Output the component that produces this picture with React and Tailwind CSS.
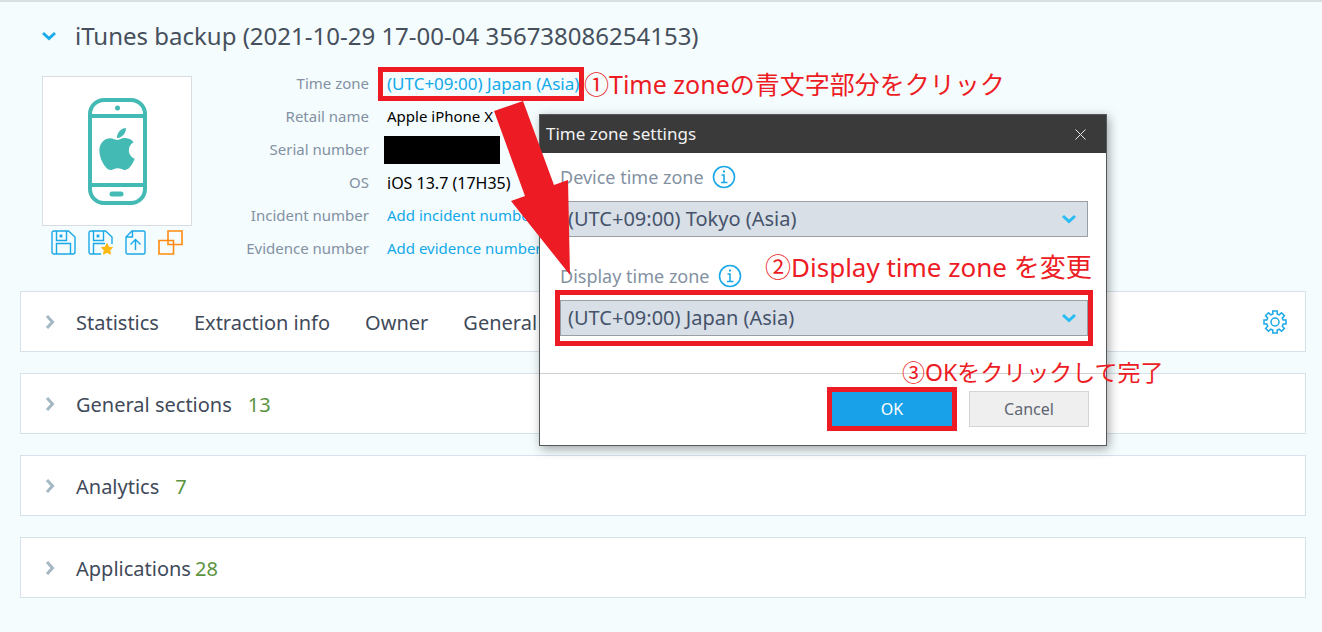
import React, { useState } from 'react';
import clsx from 'clsx';
import { FaApple } from 'react-icons/fa';

const SECTIONS = [
  { name: 'General sections', count: 13, gap: 'gap-4' },
  { name: 'Analytics', count: 7, gap: 'gap-4' },
  { name: 'Applications', count: 28, gap: 'gap-1' },
];

const TABS = ['Statistics', 'Extraction info', 'Owner', 'General'];

const Chevron = ({ className }) => (
  <svg viewBox="0 0 14 10" className={className} fill="none" stroke="currentColor" strokeWidth="3">
    <path d="M1 2l6 5.5L13 2" />
  </svg>
);

const SaveIcon = ({ starred }) => (
  <svg viewBox="0 0 25 25" className="h-[25px] w-[25px]" fill="none" stroke="#1ba8e6" strokeWidth="1.4">
    <path
      d={
        starred
          ? 'M13 24H3a2 2 0 0 1-2-2V3a2 2 0 0 1 2-2h14.500l6.500 6V14'
          : 'M3 1h14.500l6.500 6v15a2 2 0 0 1-2 2H3a2 2 0 0 1-2-2V3a2 2 0 0 1 2-2z'
      }
    />
    <path d="M5.500 1v9.500h10V1" />
    <path d={starred ? 'M5.500 24V13.500H17' : 'M5.500 24V13.500h14V24'} />
    <path d="M9.300 5.300h1.400v1.400H9.300z" />
    {starred && (
      <path
        d="M19 13.500l1.700 3.600 3.900.5-2.900 2.700.8 3.900-3.500-1.900-3.500 1.900.8-3.900-2.900-2.700 3.900-.5z"
        fill="#fdb913"
        stroke="#fdb913"
        strokeWidth="1"
      />
    )}
  </svg>
);

const ExportIcon = () => (
  <svg viewBox="0 0 21 25" className="h-[25px] w-[21px]" fill="none" stroke="#1ba8e6" strokeWidth="1.4">
    <path d="M7 1h11.500a1.500 1.500 0 0 1 1.500 1.500v20a1.500 1.500 0 0 1-1.500 1.500h-16a1.500 1.500 0 0 1-1.500-1.500V7z" />
    <path d="M7.500 1v6H1M10.500 20V10M5.500 14.500l5-5 5 5" />
  </svg>
);

const MergeIcon = () => (
  <svg viewBox="0 0 25 25" className="h-[25px] w-[25px]" fill="none" stroke="#ff8a0f" strokeWidth="1.6">
    <path d="M10 1h14v13.500H10zM1 10.500h14.500V24H1z" />
  </svg>
);

const GearIcon = () => (
  <svg viewBox="0 0 24 24" className="h-6 w-6" fill="none" stroke="#1ba8e6" strokeWidth="1.5">
    <circle cx="12" cy="12" r="4" />
    <path d="M9.800 1h4.400v3l2.100.9 2.200-2.100 2.900 2.900-2.100 2.200.9 2h2.800v4.200h-2.800l-.9 2.100 2.100 2.200-2.900 2.900-2.200-2.100-2.100.9v2.900H9.800v-2.900l-2.100-.9-2.200 2.100-2.900-2.900 2.100-2.200-.9-2.100H1V9.900h2.800l.9-2-2.100-2.200 2.900-2.900 2.200 2.100 2.100-.9z" />
  </svg>
);

const PhoneIcon = () => (
  <div className="relative flex h-[107px] w-[59px] items-center justify-center pb-1 text-[#43bab3]">
    <svg viewBox="0 0 59 107" className="absolute inset-0" fill="none" stroke="currentColor" strokeWidth="4">
      <rect x="2" y="2" width="55" height="103" rx="14" />
      <path d="M2 18h55M2 87h55" />
      <circle cx="29.500" cy="10" r="2.500" fill="currentColor" stroke="none" />
      <path d="M24 96h9" strokeWidth="5" strokeLinecap="round" />
    </svg>
    <FaApple className="h-12 w-12 shrink-0" />
  </div>
);

const InfoIcon = () => (
  <svg viewBox="0 0 24 24" className="h-6 w-6" fill="none" stroke="#1ba8e6" strokeWidth="1.6">
    <circle cx="12" cy="12" r="10.500" />
    <path d="M9.500 10H12v7M9 17.500h6.500" />
    <path d="M11 6.500h2" strokeWidth="2" />
  </svg>
);

const DetailRow = ({ label, children }) => (
  <div className="flex h-[33px] items-center">
    <dt className="w-[134px] text-right text-[#8391a2]">{label}</dt>
    <dd className="ml-[18px] text-black">{children}</dd>
  </div>
);

const Note = ({ className, children }) => (
  <p
    className={clsx(
      "absolute z-20 whitespace-nowrap font-['Noto_Sans','Noto_Sans_CJK_JP',sans-serif] leading-8 text-[#ed1c24]",
      className
    )}
  >
    {children}
  </p>
);

const ZoneSelect = ({ id, label, value, options, onChange }) => (
  <div>
    <div className="flex h-6 items-center gap-2">
      <label htmlFor={id} className="text-[18px] text-[#8391a2]">
        {label}
      </label>
      <InfoIcon />
    </div>
    <div className="relative mt-3">
      <select
        id={id}
        value={value}
        onChange={(e) => onChange(e.target.value)}
        className="block h-9 w-full appearance-none border border-[#9b9fa3] bg-[#d8dfe6] pl-[7px] text-[20px] leading-8 text-[#46536b]"
      >
        {options.map((o) => (
          <option key={o}>{o}</option>
        ))}
      </select>
      <Chevron className="pointer-events-none absolute right-3 top-[13px] h-[10px] w-[14px] text-[#27bdf3]" />
    </div>
  </div>
);

const TimeZoneDialog = () => {
  const [device, setDevice] = useState('(UTC+09:00) Tokyo (Asia)');
  const [display, setDisplay] = useState('(UTC+09:00) Japan (Asia)');
  const zones = ['(UTC+09:00) Tokyo (Asia)', '(UTC+09:00) Japan (Asia)'];

  return (
    <div
      role="dialog"
      aria-labelledby="dialog-title"
      className="absolute left-[539px] top-[112px] w-[568px] border border-[#55595c] bg-white shadow-[2px_3px_10px_rgba(0,0,0,0.35)]"
    >
      <header className="flex h-[38px] items-center justify-between bg-[#3a3a3a] pl-1.5 pr-5">
        <h2 id="dialog-title" className="text-[17px] text-[#f2f2f2]">
          Time zone settings
        </h2>
        <button type="button" aria-label="Close" className="text-[#e8e8e8]">
          <svg viewBox="0 0 11 11" className="h-[11px] w-[11px]" stroke="currentColor">
            <path d="M.5.5l10 10M10.500.5l-10 10" />
          </svg>
        </button>
      </header>

      <div className="flex flex-col gap-[27px] pb-[37px] pl-5 pr-[18px] pt-3">
        <ZoneSelect id="device-zone" label="Device time zone" value={device} options={zones} onChange={setDevice} />
        <div className="relative">
          <ZoneSelect id="display-zone" label="Display time zone" value={display} options={zones} onChange={setDisplay} />
          <div className="pointer-events-none absolute -bottom-2.5 -left-[5px] -right-[5px] h-14 border-5 border-[#ed1c24]" />
        </div>
      </div>

      <footer className="flex items-center justify-end gap-3 border-t border-[#cfcfcf] pb-3.5 pr-[17px] pt-[13px]">
        <button type="button" className="h-11 w-[130px] border-5 border-[#ed1c24] bg-[#18a0e8] text-[16px] text-white">
          OK
        </button>
        <button type="button" className="h-9 w-[120px] border border-[#d4d4d4] bg-[#efefef] text-[16px] text-[#5f6672]">
          Cancel
        </button>
      </footer>
    </div>
  );
};

const App = () => {
  return (
    <main className="relative min-h-screen overflow-hidden border-t-2 border-[#dadfe1] bg-[#f4fcfe] pb-8 pl-5 pr-4 font-['Noto_Sans',sans-serif]">
      <header className="flex h-[67px] items-center gap-[19px] pl-[22px]">
        <Chevron className="h-[10px] w-[14px] text-[#18aaea]" />
        <h1 className="text-[24px] text-[#46505c]">iTunes backup (2021-10-29 17-00-04 356738086254153)</h1>
      </header>

      <section className="flex h-[222px] pl-[22px]">
        <div>
          <div className="mt-[7px] flex h-[150px] w-[150px] items-center justify-center border border-[#d8dde1] bg-white">
            <PhoneIcon />
          </div>
          <div className="mt-1 flex gap-3 pl-[9px]">
            <button type="button" aria-label="Save"><SaveIcon /></button>
            <button type="button" aria-label="Save as favourite"><SaveIcon starred /></button>
            <button type="button" aria-label="Export"><ExportIcon /></button>
            <button type="button" aria-label="Merge"><MergeIcon /></button>
          </div>
        </div>

        <dl className="-mt-0.5 ml-[43px] text-[15px]">
          <DetailRow label="Time zone">
            <a href="#timezone" className="-ml-[9px] flex h-[34px] items-center border-5 border-[#ed1c24] pl-1 text-[17px] text-[#12a9ea]">
              (UTC+09:00) Japan (Asia)
            </a>
          </DetailRow>
          <DetailRow label="Retail name">Apple iPhone X</DetailRow>
          <DetailRow label="Serial number">
            <div className="-ml-[3px] h-7 w-[116px] bg-black" />
          </DetailRow>
          <DetailRow label="OS">
            <span className="text-[16px]">iOS 13.7 (17H35)</span>
          </DetailRow>
          <DetailRow label="Incident number">
            <a href="#incident" className="text-[#12a9ea]">Add incident number</a>
          </DetailRow>
          <DetailRow label="Evidence number">
            <a href="#evidence" className="text-[#12a9ea]">Add evidence number</a>
          </DetailRow>
        </dl>
      </section>

      <div className="flex flex-col gap-[21px] text-[20px] text-[#3f4a5a]">
        <nav className="flex h-[61px] items-center border border-[#d6e1ec] bg-white pl-[22px] pr-[18px]">
          <Chevron className="h-[10px] w-[14px] -rotate-90 text-[#a3b8c3]" />
          <div className="ml-[19px] flex gap-[35px] pt-0.5">
            {TABS.map((tab) => (
              <button key={tab} type="button">{tab}</button>
            ))}
          </div>
          <button type="button" aria-label="Settings" className="ml-auto">
            <GearIcon />
          </button>
        </nav>
        {SECTIONS.map(({ name, count, gap }) => (
          <button
            key={name}
            type="button"
            className="flex h-[61px] items-center border border-[#d6e1ec] bg-white pl-[22px]"
          >
            <Chevron className="h-[10px] w-[14px] -rotate-90 text-[#a3b8c3]" />
            <span className={clsx('ml-[19px] flex pt-0.5', gap)}>
              {name}
              <span className="text-[#5b9440]">{count}</span>
            </span>
          </button>
        ))}
      </div>

      <TimeZoneDialog />

      {/* Step-by-step notes drawn over the window */}
      <svg viewBox="0 0 80 176" className="pointer-events-none absolute left-[493px] top-[99px] z-10 h-[176px] w-[80px]" fill="#ed1c24">
        <path d="M1 10L30 0l31 84 14-5 2 95L18 100l14-5z" />
      </svg>
      <Note className="left-[584px] top-[66px] text-[25px]">①Time zoneの青文字部分をクリック</Note>
      <Note className="left-[765px] top-[249px] text-[26px]">②Display time zone を変更</Note>
      <Note className="left-[902px] top-[354px] text-[23px]">③OKをクリックして完了</Note>
    </main>
  );
};

export default App;
